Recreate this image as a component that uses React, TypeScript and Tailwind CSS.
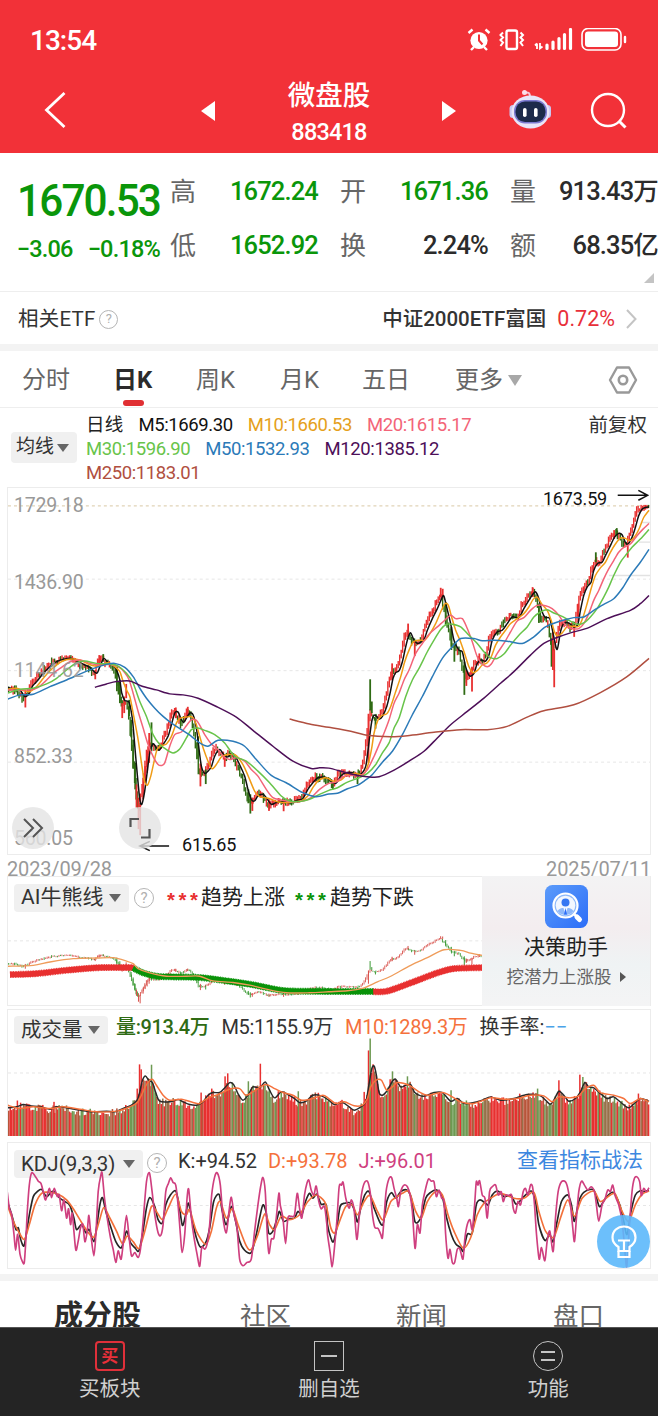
import { ReactNode } from "react";

type Point = [number, number];

// Chart space: 1929 units wide (3 per pixel). Points after the "|" are
// measured from the middle of the chart.
const MIDDLE = 984;
const LEFT = 24;

function parse(series: string): Point[] {
  const points: Point[] = [];
  series.split("|").forEach((half, index) => {
    half
      .trim()
      .split(" ")
      .filter(Boolean)
      .forEach((pair) => {
        const [x, y] = pair.split(",").map(Number);
        points.push([x + index * MIDDLE, y]);
      });
  });
  return points;
}

function valueAt(points: Point[], x: number) {
  if (x <= points[0][0]) return points[0][1];
  for (let i = 1; i < points.length; i++) {
    const [x1, y1] = points[i];
    const [x0, y0] = points[i - 1];
    if (x <= x1) return x1 === x0 ? y1 : y0 + ((y1 - y0) * (x - x0)) / (x1 - x0);
  }
  return points[points.length - 1][1];
}

function smooth(points: Point[]) {
  let d = `M${points[0][0]} ${points[0][1]}`;
  for (let i = 0; i < points.length - 1; i++) {
    const a = points[i - 1] || points[i];
    const b = points[i];
    const c = points[i + 1];
    const e = points[i + 2] || c;
    d += `C${b[0] + (c[0] - a[0]) / 7} ${b[1] + (c[1] - a[1]) / 7} ${c[0] - (e[0] - b[0]) / 7} ${c[1] - (e[1] - b[1]) / 7} ${c[0]} ${c[1]}`;
  }
  return d;
}

function noise(seed: number) {
  const n = Math.sin(seed * 127.1 + 11.7) * 43758.5453;
  return n - Math.floor(n);
}

const M5 = parse(
  "22,622 45,628 60,630 75,650 88,640 98,618 110,605 130,580 150,560 170,545 190,538 215,535 235,545 255,555 270,562 290,580 300,560 312,535 325,548 340,555 352,575 360,600 366,640 375,662 388,668 398,720 405,800 412,880 420,960 426,975 434,940 442,880 450,820 460,793 470,805 478,812 490,795 505,770 515,735 525,700 535,697 545,720 552,728 560,715 570,700 580,705 590,745 597,800 605,860 615,882 625,875 635,862 645,830 660,810 672,825 685,832 695,820 708,832 722,860 735,890 745,930 755,960 765,965 775,950 790,945 800,955 815,975 830,970 850,968 875,970 895,962 910,958 925,930 940,910 955,895 975,893 988,900 | 10,905 25,912 40,890 55,880 75,880 90,888 105,880 115,860 122,810 128,760 134,720 142,706 155,718 165,710 178,680 188,640 197,595 205,578 215,572 225,545 235,500 243,470 250,458 260,480 272,490 290,478 300,450 315,415 330,385 345,350 350,348 358,380 370,430 380,480 395,510 405,515 415,560 427,588 440,580 450,550 462,540 475,543 485,525 495,480 510,455 525,450 540,430 555,410 575,412 590,385 605,360 618,340 626,335 635,355 645,395 655,412 668,415 680,470 690,508 700,455 710,430 725,428 740,440 752,432 760,390 770,345 780,320 792,305 800,270 812,248 825,245 835,225 850,195 862,170 875,158 885,162 895,185 903,190 915,170 925,140 935,105 945,85 955,80 966,78"
);

const M10 = parse(
  "22,628 50,625 70,632 90,635 110,620 130,595 150,572 170,555 190,542 215,537 240,540 265,552 285,558 305,555 325,548 345,560 360,575 370,605 380,630 390,650 400,700 415,780 425,850 434,905 443,917 453,890 462,850 472,810 485,798 500,793 515,770 530,730 542,715 560,712 578,712 590,735 600,770 612,810 625,845 637,868 650,855 665,832 685,825 705,825 720,840 735,865 750,900 765,935 780,952 795,955 815,960 835,968 860,970 885,967 905,965 925,950 940,925 955,905 975,895 988,898 | 15,905 40,902 60,885 85,882 108,885 122,855 132,810 140,760 150,725 162,708 178,702 190,680 205,635 220,590 232,545 245,510 258,485 275,480 292,480 308,460 325,430 340,395 353,370 363,375 373,410 385,450 398,480 412,520 425,560 438,578 452,570 465,555 480,548 492,530 505,495 520,470 535,450 550,430 570,415 590,400 605,380 618,357 630,350 643,370 660,390 672,420 682,455 692,468 705,458 720,440 740,438 755,438 768,410 780,370 792,325 805,285 820,262 835,245 850,215 865,190 880,172 895,173 910,180 925,165 938,140 950,110 966,88"
);

const M20 = parse(
  "22,630 60,630 90,630 115,622 135,605 160,580 185,562 210,545 240,540 270,550 300,555 330,553 355,560 375,578 388,600 400,640 415,695 430,745 445,795 462,835 475,855 485,858 495,850 510,800 525,765 545,757 560,738 575,720 590,722 602,740 615,765 635,793 655,810 670,830 690,840 710,835 735,845 755,870 775,890 800,930 820,955 845,962 880,968 910,965 935,955 960,930 988,912 | 25,908 50,890 75,888 100,888 120,870 140,830 155,795 170,760 185,720 200,670 215,640 230,600 245,570 265,520 285,490 305,462 330,440 350,422 370,405 385,415 405,415 420,445 435,485 450,530 465,552 480,560 492,552 510,520 530,490 550,455 570,422 590,412 610,390 630,375 655,376 675,385 695,405 715,435 735,445 755,445 770,430 785,400 800,360 815,330 830,295 845,265 860,240 875,215 890,200 910,190 930,165 948,145 966,128"
);

const M30 = parse(
  "22,640 60,628 100,625 140,612 170,595 200,570 230,548 255,543 290,550 330,552 355,558 380,580 400,610 420,665 440,710 460,765 480,795 500,810 520,820 540,808 560,775 575,750 595,745 615,752 645,765 675,790 705,830 740,845 775,875 810,910 845,950 870,965 900,967 930,960 960,945 988,933 | 30,925 60,908 95,895 120,882 145,855 165,820 185,790 200,745 215,715 235,650 255,600 275,565 300,515 320,480 340,448 358,432 375,432 400,440 425,465 450,490 470,515 488,532 510,535 530,522 550,495 575,465 600,440 620,410 640,395 660,388 680,398 705,408 725,420 750,432 770,428 790,410 810,385 830,350 845,320 860,285 880,245 895,225 915,200 940,175 966,146"
);

const M50 = parse(
  "22,658 60,645 100,643 150,620 200,600 245,580 290,562 320,553 345,550 375,562 400,590 420,625 440,655 465,685 490,710 515,730 545,750 575,770 600,790 625,800 655,782 700,785 735,800 770,840 815,888 860,910 910,940 950,952 988,944 | 30,942 60,928 90,918 110,905 135,885 165,848 195,815 225,765 255,705 285,650 315,590 345,535 375,500 400,475 440,475 465,482 500,480 540,483 585,490 620,470 655,440 700,422 740,412 770,410 800,390 830,372 860,355 885,325 910,285 940,245 966,206"
);

const M120 = parse(
  "285,622 320,612 350,605 390,603 425,618 470,630 510,642 550,645 595,655 650,680 710,712 760,752 820,800 880,845 935,867 960,865 988,866 | 50,878 90,888 120,892 155,892 200,872 245,845 290,815 330,775 370,735 420,695 470,655 520,610 560,575 610,525 650,490 690,472 730,458 785,442 840,415 910,390 940,370 966,345"
);

const M250 = parse(
  "870,718 930,733 988,743 | 70,755 120,767 190,771 240,768 320,758 400,750 480,750 540,740 600,712 650,693 740,675 820,638 900,590 966,535"
);

const averages = [
  { stroke: "#111111", points: M5 },
  { stroke: "#f09c15", points: M10 },
  { stroke: "#f36478", points: M20 },
  { stroke: "#68c44a", points: M30 },
  { stroke: "#2b7ab8", points: M50 },
  { stroke: "#4d0f58", points: M120 },
  { stroke: "#b04f40", points: M250 },
];

const RED = "#e83030";
const GREEN = "#2f6b14";

// x, top, bottom, colour of the days that run far from the average
const spikes: [number, number, number, string][] = [
  [76, 630, 683, RED],
  [286, 570, 598, RED],
  [298, 525, 560, RED],
  [310, 522, 545, GREEN],
  [351, 560, 634, GREEN],
  [360, 600, 670, GREEN],
  [367, 670, 715, RED],
  [373, 650, 700, RED],
  [379, 612, 655, RED],
  [388, 660, 710, GREEN],
  [394, 720, 773, GREEN],
  [400, 780, 868, GREEN],
  [406, 850, 930, GREEN],
  [410, 915, 985, RED],
  [416, 955, 1050, RED],
  [421, 975, 1068, RED],
  [430, 895, 960, RED],
  [436, 860, 910, RED],
  [442, 815, 880, RED],
  [448, 760, 850, RED],
  [455, 728, 815, GREEN],
  [528, 683, 715, RED],
  [564, 681, 710, RED],
  [595, 770, 838, GREEN],
  [602, 852, 921, RED],
  [618, 870, 914, GREEN],
  [675, 830, 862, RED],
  [746, 930, 972, GREEN],
  [752, 945, 1003, GREEN],
  [758, 955, 995, RED],
  [808, 960, 995, RED],
  [852, 965, 996, RED],
  [1000, 910, 930, GREEN],
  [1074, 890, 914, GREEN],
  [1107, 702, 850, RED],
  [1112, 598, 692, GREEN],
  [1117, 665, 700, GREEN],
  [1128, 715, 747, GREEN],
  [1178, 550, 600, RED],
  [1226, 430, 470, RED],
  [1246, 480, 528, RED],
  [1324, 322, 350, RED],
  [1330, 325, 352, RED],
  [1339, 365, 435, GREEN],
  [1356, 440, 500, GREEN],
  [1365, 495, 545, GREEN],
  [1395, 545, 645, GREEN],
  [1401, 570, 618, RED],
  [1418, 560, 635, RED],
  [1440, 520, 550, RED],
  [1600, 320, 350, RED],
  [1619, 370, 428, GREEN],
  [1657, 475, 560, GREEN],
  [1665, 507, 622, RED],
  [1661, 455, 570, RED],
  [1725, 435, 470, RED],
  [1737, 370, 425, RED],
  [1790, 215, 245, GREEN],
  [1845, 148, 175, RED],
  [1853, 142, 160, GREEN],
  [1886, 195, 231, RED],
];

const STEP = 4.45;
const days = Array.from({ length: 433 }, (_, i) => {
  const x = LEFT + 2 + i * STEP;
  const open = valueAt(M5, x + 4) + (noise(i) - 0.5) * 12;
  const close = valueAt(M5, x + 9) + (noise(i + 1) - 0.5) * 12;
  const slope = close - valueAt(M5, x);
  const up = noise(i * 3.3) < 0.55 - slope / 45;
  const shift = Math.max(-14, Math.min(14, slope * 0.3));
  const top = Math.min(open, close) + shift - 3 - noise(i * 5.1) * 7;
  const bottom = Math.max(open, close) + shift + 3 + noise(i * 7.7) * 7;
  return { x, top: Math.max(72, top), bottom, color: up ? RED : GREEN };
});

const VOL5 = parse(
  "22,308 50,305 70,298 90,302 120,305 150,312 170,305 200,308 240,315 280,320 320,318 345,320 375,308 395,300 412,285 420,260 428,225 437,212 447,225 458,232 468,262 480,288 510,290 535,283 550,290 570,298 590,300 610,290 625,270 640,262 660,262 675,248 690,232 702,238 715,265 730,285 745,270 760,245 780,248 797,230 810,255 825,278 845,260 865,268 885,280 900,292 920,288 940,270 965,272 988,285 | 20,298 45,292 65,305 80,315 100,305 115,290 125,235 133,190 140,182 147,210 155,262 165,270 180,255 195,228 205,222 220,245 235,240 250,238 262,262 280,272 295,272 320,262 345,262 370,288 390,280 410,295 440,292 465,285 490,275 520,285 560,280 600,268 640,272 668,297 680,285 695,258 710,270 725,288 745,280 760,260 773,232 785,245 800,248 820,265 840,280 860,275 885,295 905,308 925,292 940,280 966,288"
);

const VOL10 = parse(
  "22,300 60,310 100,305 150,310 190,305 240,312 290,320 350,318 390,305 412,293 425,270 440,238 457,222 470,240 490,270 510,285 545,282 580,292 600,295 625,278 655,268 690,252 720,250 738,270 760,260 797,238 825,250 850,262 880,270 905,285 940,280 970,270 988,280 | 25,295 50,290 80,302 105,300 120,280 130,245 145,225 162,225 178,255 195,245 210,232 245,240 275,260 300,270 345,262 375,275 400,290 440,295 490,278 530,282 570,280 610,270 650,272 675,290 695,275 730,278 755,272 775,250 800,240 820,262 860,270 890,280 910,295 940,280 966,290"
);

const volumeSpikes: [number, number, string][] = [
  [52, 286, RED],
  [162, 290, RED],
  [412, 250, RED],
  [419, 177, RED],
  [424, 192, RED],
  [455, 178, "#6d9a52"],
  [604, 262, RED],
  [636, 250, RED],
  [676, 213, RED],
  [684, 204, RED],
  [746, 228, "#6d9a52"],
  [782, 175, RED],
  [896, 258, "#6d9a52"],
  [1094, 260, RED],
  [1107, 135, RED],
  [1112, 99, "#6d9a52"],
  [1172, 222, RED],
  [1179, 198, "#6d9a52"],
  [1224, 213, "#6d9a52"],
  [1355, 255, "#6d9a52"],
  [1615, 250, "#6d9a52"],
  [1679, 225, RED],
  [1742, 208, RED],
  [1751, 215, "#6d9a52"],
  [1918, 265, RED],
];

const barColors = [RED, "#e83030", "#b8553a", "#97704a", "#6d9a52"];
const volumes = Array.from({ length: 433 }, (_, i) => {
  const x = LEFT + i * STEP;
  const top = valueAt(VOL5, x + 4) + (noise(i * 2.7) - 0.35) * 26;
  const falling = valueAt(M5, x + 14) > valueAt(M5, x) + 5 ? 0.25 : -0.12;
  const pick = Math.max(0, Math.min(4, Math.floor((noise(i * 9.1) + falling) * 5)));
  return { x, top, color: barColors[pick] };
});

const J = parse(
  "22,562 28,610 35,630 42,690 47,738 53,690 60,750 67,772 73,775 78,700 82,620 88,540 95,503 105,512 115,528 123,535 130,560 137,585 148,550 155,578 163,550 172,575 178,570 185,618 192,585 200,640 206,612 212,660 217,625 222,680 228,738 235,710 242,670 249,660 255,712 262,680 267,632 273,690 282,755 288,690 295,560 303,510 307,505 314,580 322,640 332,700 340,735 348,775 355,740 364,765 372,700 380,632 388,700 395,755 405,745 415,760 422,735 430,650 440,530 449,503 457,560 465,630 475,685 483,693 490,660 498,560 506,535 513,518 520,532 528,540 535,600 542,690 547,745 555,690 562,580 567,553 575,640 583,700 592,750 600,787 606,730 615,735 622,720 630,660 636,570 645,515 653,503 662,540 670,640 680,685 688,620 695,577 703,630 712,670 720,765 730,785 742,775 755,765 765,680 775,600 783,545 790,517 797,560 803,690 808,748 815,705 823,700 830,640 838,565 842,600 850,640 858,718 865,640 875,635 885,630 893,565 900,610 907,640 915,570 922,535 928,525 935,555 943,570 950,543 958,590 965,612 975,605 982,660 | 0,690 8,745 14,788 20,740 28,650 35,545 42,540 47,532 55,580 65,610 72,585 80,615 88,705 95,640 102,570 110,535 120,528 128,560 135,630 142,668 152,672 160,690 165,700 170,640 176,560 185,520 193,518 200,550 208,580 213,605 220,560 230,540 240,545 248,570 255,620 263,732 270,660 278,685 285,600 295,550 303,522 312,528 320,530 327,575 335,555 343,580 350,590 355,690 362,762 368,735 375,775 382,775 390,735 398,735 407,765 413,700 420,660 428,645 435,675 442,600 447,530 452,540 457,527 465,570 473,580 480,640 487,560 495,545 505,540 513,570 522,560 528,590 535,570 545,572 553,570 558,610 565,625 572,590 580,600 588,560 595,550 602,570 610,540 616,545 622,600 628,690 636,765 643,730 653,770 660,710 668,680 678,742 685,640 693,560 703,530 715,530 722,550 730,600 736,660 742,712 748,640 755,560 763,528 772,540 782,555 792,545 802,560 808,600 815,650 825,600 833,585 842,555 850,560 857,540 865,575 875,600 885,650 892,720 899,788 906,680 915,560 922,520 930,515 938,530 943,572 950,550 958,560 966,548"
);

const K = parse(
  "22,590 35,630 48,675 55,670 62,705 72,725 80,680 90,620 100,575 112,560 125,553 140,575 155,560 165,562 180,580 195,590 210,602 222,640 230,675 245,660 258,685 268,675 282,712 290,670 300,600 308,578 318,620 332,665 348,712 365,730 380,680 392,715 405,730 417,740 428,690 440,610 450,578 465,605 475,645 488,655 498,600 512,570 528,558 538,600 548,662 558,630 566,595 578,650 590,700 602,728 618,715 630,670 642,590 658,568 668,620 680,660 695,605 708,650 720,710 735,738 755,745 770,690 780,640 790,600 800,625 807,685 820,680 833,640 840,620 852,650 870,642 885,640 895,620 907,630 918,590 930,565 940,580 952,568 965,598 980,600 | 0,660 10,700 18,712 28,670 38,605 52,595 70,595 82,620 90,652 100,610 112,570 125,560 140,610 165,662 178,590 192,563 205,580 220,560 238,555 252,580 263,652 280,640 295,580 310,562 328,555 345,575 358,640 372,690 385,718 400,730 408,740 420,690 435,685 447,600 458,585 475,595 483,600 495,570 512,558 530,575 552,572 567,598 590,575 612,558 625,590 635,660 653,708 668,690 678,712 690,650 703,590 722,570 733,600 742,650 755,590 770,562 800,555 817,605 835,580 858,562 878,600 890,650 900,690 912,620 925,570 940,557 950,560 966,556"
);

const D = parse(
  "22,600 40,650 55,680 73,705 88,660 105,600 125,565 150,562 175,568 200,585 220,612 240,645 262,680 282,698 298,650 312,608 330,640 350,680 368,718 382,695 400,712 418,732 435,680 455,605 470,620 488,645 505,610 528,568 545,620 560,630 570,615 590,680 618,720 635,680 650,610 662,590 680,640 698,612 715,660 740,725 755,735 775,690 795,628 810,660 825,675 845,635 870,645 900,630 925,590 950,570 975,590 | 0,620 10,670 22,685 40,640 55,605 75,600 90,630 110,590 128,572 150,620 168,645 190,590 205,578 225,565 245,560 265,620 282,640 300,590 325,560 345,570 362,630 380,680 408,732 430,700 450,630 470,595 490,580 520,565 560,580 590,580 620,562 635,620 655,680 680,698 700,640 722,585 742,635 765,580 800,558 820,590 850,570 865,568 885,620 905,650 925,600 945,568 966,558"
);

const bullFast = parse(
  "22,288 100,285 150,275 220,265 290,263 340,262 380,272 400,280 415,295 450,308 500,318 560,318 600,318 640,332 700,337 750,345 800,357 860,368 930,368 988,365 | 60,362 105,355 150,335 190,318 250,285 300,262 350,238 400,240 430,248 464,255"
);

const bullTrend = [
  { stroke: "#e83030", points: parse("30,313 110,310 200,300 300,292 402,292") },
  {
    stroke: "#0a930a",
    points: parse("400,293 430,308 470,318 520,320 600,322 680,332 750,342 800,352 860,362 988,364 | 140,364"),
  },
  { stroke: "#e83030", points: parse("| 138,365 180,363 250,338 330,308 380,295 464,292") },
];

function Line({ points, stroke, width = 4.5 }: { points: Point[]; stroke: string; width?: number }) {
  return <path d={smooth(points)} fill="none" stroke={stroke} strokeWidth={width} strokeLinejoin="round" />;
}

function Guide({ y, stroke = "#e6e6e6" }: { y: number; stroke?: string }) {
  return <path d={`M24 ${y}H1953`} stroke={stroke} strokeWidth="3" strokeDasharray="9 9" />;
}

function PriceChart() {
  return (
    <svg className="block h-full w-full" viewBox="24 21 1929 1104" preserveAspectRatio="none">
      <Guide y={75} stroke="#d9c8a5" />
      <Guide y={296} />
      <Guide y={572} />
      <Guide y={848} />
      <path d="M1925 125H1953M1920 184H1953M1830 285H1953" stroke="#e2e2e2" strokeWidth="4" />
      {days.map((day) => (
        <rect key={day.x} x={day.x - 2} y={day.top} width="4.2" height={day.bottom - day.top} fill={day.color} />
      ))}
      {spikes.map(([x, top, bottom, color]) => (
        <rect key={x} x={x - 2.5} y={top} width="5.4" height={bottom - top} fill={color} />
      ))}
      {averages.map((line) => (
        <Line key={line.stroke} points={line.points} stroke={line.stroke} />
      ))}
      <path d="M1856 43H1944M1918 28L1946 43L1918 58" fill="none" stroke="#111" strokeWidth="4.5" />
      <path d="M508 1101H424M450 1087L420 1101L450 1115" fill="none" stroke="#111" strokeWidth="4.5" />
    </svg>
  );
}

function BullBearChart() {
  return (
    <svg className="block h-full w-full" viewBox="24 18 1929 387" preserveAspectRatio="none">
      <Guide y={211} />
      {days
        .filter((day) => day.x < 1446)
        .map((day) => {
          const top = 255 + (day.top - 535) * 0.272;
          return (
            <rect
              key={day.x}
              x={day.x - 1.5}
              y={top}
              width="2.6"
              height={Math.max(3, (day.bottom - day.top) * 0.3)}
              fill={day.color === RED ? "#d8504a" : "#3c9a35"}
            />
          );
        })}
      {spikes
        .filter(([x]) => x < 1446)
        .map(([x, top, bottom, color]) => (
          <rect
            key={x}
            x={x - 1.5}
            y={255 + (top - 535) * 0.272}
            width="3"
            height={(bottom - top) * 0.272}
            fill={color === RED ? "#d8504a" : "#3c9a35"}
          />
        ))}
      {bullTrend.map((line, index) => (
        <g key={index}>
          <Line points={line.points} stroke={line.stroke} width={17} />
          <path
            d={smooth(line.points)}
            fill="none"
            stroke={line.stroke}
            strokeWidth="21"
            strokeDasharray="2.5 2.5"
          />
        </g>
      ))}
      <Line points={bullFast} stroke="#ef9c5a" width={4} />
      <rect x="1949" y="198" width="4" height="20" fill={RED} />
    </svg>
  );
}

function VolumeChart() {
  return (
    <svg className="block h-full w-full" viewBox="24 13 1929 380" preserveAspectRatio="none">
      <Guide y={203} />
      {volumes.map((bar) => (
        <rect key={bar.x} x={bar.x} y={bar.top} width="4.6" height={393 - bar.top} fill={bar.color} />
      ))}
      {volumeSpikes.map(([x, top, color]) => (
        <rect key={x} x={x - 2} y={top} width="4.5" height={393 - top} fill={color} />
      ))}
      <Line points={VOL5} stroke="#2a2a2a" />
      <Line points={VOL10} stroke="#f5713c" />
    </svg>
  );
}

function KdjChart() {
  return (
    <svg className="block h-full w-full" viewBox="24 412 1929 380" preserveAspectRatio="none">
      <Guide y={602} />
      <Line points={K} stroke="#262626" width={5} />
      <Line points={D} stroke="#f2703a" width={5} />
      <Line points={J} stroke="#cf3f7f" width={5} />
    </svg>
  );
}

function StatusIcons() {
  return (
    <svg className="mt-[1px] h-6 w-40" viewBox="467 28 160 24" fill="none" stroke="#fff">
      <circle cx="479" cy="40.5" r="8.6" fill="#fff" stroke="none" />
      <path d="M474 47L471 50M484 47L487 50M468.5 33L472.5 29.5M489.5 33L485.5 29.5" strokeWidth="2.4" />
      <path d="M479 34.5V40.5L482.5 44.5" stroke="#f23138" strokeWidth="2" />
      <rect x="506.5" y="30.5" width="10.5" height="18.5" rx="1.8" strokeWidth="2.4" />
      <path d="M503 32.5L500.500 35L503 37.500L500.500 40L503 42.500L500.500 46M520.500 32.500L523 35L520.500 37.500L523 40L520.500 42.500L523 46" strokeWidth="2" />
      <path d="M537 43.5V49M535 45.5L537 43.5M540 43V48.5L542.5 46.5" strokeWidth="1.8" />
      <path d="M547 45V48.5M553 42V48.5M559 38.5V48.5M564.5 34.5V48.500M570.500 29.500V48.500" strokeWidth="3.2" strokeLinecap="round" />
      <rect x="582" y="28.5" width="39" height="21.5" rx="6" strokeWidth="1.6" />
      <rect x="585" y="31.5" width="33" height="15.5" rx="3" fill="#fff" stroke="none" />
      <path d="M625 37V42" strokeWidth="2.4" strokeLinecap="round" />
    </svg>
  );
}

function Robot() {
  return (
    <svg className="h-10 w-[44px]" viewBox="508 89 44 40">
      <path d="M530 97C530 93 528.5 92 525 92.5" fill="none" stroke="#f6c6d8" strokeWidth="2" />
      <circle cx="524.5" cy="92.5" r="2.5" fill="#fbdde8" />
      <rect x="509.5" y="105" width="7" height="13" rx="3.5" fill="#c9c8f2" />
      <rect x="544" y="105" width="7" height="13" rx="3.5" fill="#c9c8f2" />
      <ellipse cx="530.5" cy="112" rx="19" ry="16.5" fill="#e9e5f8" />
      <rect x="514" y="100" width="33" height="23.5" rx="11" fill="#7b7ad0" />
      <rect x="515.5" y="101.5" width="30" height="20.5" rx="9.5" fill="#1c2a4a" />
      <rect x="523" y="108" width="3.6" height="9" rx="1.8" fill="#fff" />
      <rect x="534" y="108" width="3.6" height="9" rx="1.8" fill="#fff" />
    </svg>
  );
}

function Question({ className }: { className: string }) {
  return (
    <span
      className={`flex shrink-0 items-center justify-center rounded-full border-[1.5px] border-[#b5b5b5] text-[#b0b0b0] ${className}`}
    >
      ?
    </span>
  );
}

function Caret({ className = "" }: { className?: string }) {
  return (
    <span
      className={`inline-block border-x-[6px] border-t-[8px] border-x-transparent border-t-[#666] ${className}`}
    />
  );
}

function Selector({ children, className }: { children: ReactNode; className: string }) {
  return (
    <div className={`flex items-center justify-between rounded bg-[#f0f0f0] pr-2 ${className}`}>
      <span>{children}</span>
      <Caret />
    </div>
  );
}

function Quote({ label, value, green }: { label: string; value: string; green?: boolean }) {
  return (
    <div className="flex items-center justify-between">
      <span className="text-[26px] text-[#666]">{label}</span>
      <span
        className={`text-[25.5px] font-medium tracking-[-0.85px] whitespace-nowrap ${green ? "text-[#0a960a]" : "text-[#2b2b2b]"}`}
      >
        {value}
      </span>
    </div>
  );
}

function Header() {
  return (
    <header className="h-[153px] bg-[#f23138] text-white">
      <div className="flex h-[78px] items-center justify-between pr-[31px] pl-[30px]">
        <span className="pt-1 text-[28px] font-medium tracking-[-1px]">13:54</span>
        <StatusIcons />
      </div>
      <div className="flex h-[66px] items-center">
        <svg className="ml-[44px] h-10 w-6" viewBox="0 0 24 40" fill="none" stroke="#fff" strokeWidth="2.8">
          <path d="M20.5 2L2.5 19L20.5 36" />
        </svg>
        <span className="ml-[133px] border-y-[10px] border-r-[14px] border-y-transparent border-r-white" />
        <div className="mt-[6px] ml-[54px] flex w-[120px] flex-col items-center">
          <h1 className="text-[27.5px] leading-[37px] font-medium">微盘股</h1>
          <span className="text-[23.5px] leading-[37px] font-medium tracking-[-0.8px]">883418</span>
        </div>
        <span className="ml-[53px] border-y-[10px] border-l-[14px] border-y-transparent border-l-white" />
        <div className="mb-1 ml-[52px]">
          <Robot />
        </div>
        <svg className="ml-[38px] h-10 w-10" viewBox="0 0 40 40" fill="none" stroke="#fff" strokeWidth="2.4">
          <circle cx="18" cy="19" r="16" />
          <path d="M29 30L35.500 36.500" strokeWidth="3" />
        </svg>
      </div>
    </header>
  );
}

function QuotePanel() {
  return (
    <section className="relative h-[139px] border-b border-[#eeeeee] pt-[12px]">
      <div className="grid grid-cols-[148px_148px_148px_148px] gap-x-[22px]">
        <div className="flex h-[108px] w-[160px] flex-col items-end whitespace-nowrap text-[#0a960a]">
          <span className="mt-[8px] origin-right scale-x-[0.94] text-[45px] leading-[56px] font-medium tracking-[-2px]">
            1670.53
          </span>
          <div className="flex gap-[15px] text-[23.5px] leading-[40px] font-medium tracking-[-0.8px]">
            <span>−3.06</span>
            <span>−0.18%</span>
          </div>
        </div>
        <div className="grid grid-rows-2 leading-none">
          <Quote label="高" value="1672.24" green />
          <Quote label="低" value="1652.92" green />
        </div>
        <div className="grid grid-rows-2 leading-none">
          <Quote label="开" value="1671.36" green />
          <Quote label="换" value="2.24%" />
        </div>
        <div className="grid grid-rows-2 leading-none">
          <Quote label="量" value="913.43万" />
          <Quote label="额" value="68.35亿" />
        </div>
      </div>
      <span className="absolute right-[4px] bottom-[8px] border-b-[10px] border-l-[10px] border-b-[#c4c4c4] border-l-transparent" />
    </section>
  );
}

function RelatedFund() {
  return (
    <section className="flex h-[52px] items-center pt-[2px] pr-[21px] pl-[18px] text-[20.5px] text-[#333]">
      <span className="tracking-[0.2px]">相关ETF</span>
      <Question className="ml-1 size-[19px] text-[13px]" />
      <span className="ml-auto font-medium">中证2000ETF富国</span>
      <span className="ml-[11px] text-[21.5px] text-[#e8303a]">0.72%</span>
      <svg className="ml-[10px] h-5 w-3" viewBox="0 0 12 20" fill="none" stroke="#c4c4c4" strokeWidth="2">
        <path d="M2 1L10.5 10L2 19" />
      </svg>
    </section>
  );
}

function PeriodTabs() {
  return (
    <nav className="flex h-[57px] items-center border-b border-[#eeeeee] pt-[2px] text-[24px] text-[#666]">
      <span className="ml-[22px] w-[91px]">分时</span>
      <span className="relative w-[83px] font-bold text-[#2b2b2b]">
        日K
        <span className="absolute top-[38px] left-[10px] h-[6px] w-[21px] rounded-[3px] bg-[#e02f33]" />
      </span>
      <span className="w-[84px]">周K</span>
      <span className="w-[82px]">月K</span>
      <span className="w-[93px]">五日</span>
      <span>更多</span>
      <span className="ml-[5px] border-x-[7px] border-t-[11px] border-x-transparent border-t-[#a8a8a8]" />
      <svg className="mr-[20px] ml-auto h-[30px] w-[30px]" viewBox="0 0 30 30" fill="none" stroke="#999">
        <path d="M9 2.5H21L28 15L21 27.5H9L2 15Z" strokeWidth="2.4" strokeLinejoin="round" />
        <circle cx="15" cy="15" r="4.2" strokeWidth="2.6" />
      </svg>
    </nav>
  );
}

function AverageLegend() {
  return (
    <section className="flex h-[79px] pl-[11px] text-[19px] text-[#333]">
      <Selector className="mt-6 h-[31px] w-[66px] pl-[5px]">均线</Selector>
      <div className="ml-[9px] pt-[5px] text-[18.5px] leading-6 tracking-[-0.4px]">
        <div className="flex gap-[15px]">
          <span className="tracking-[0.2px] text-[#222]">日线</span>
          <span className="text-[#111]">M5:1669.30</span>
          <span className="text-[#e5a01c]">M10:1660.53</span>
          <span className="text-[#f36478]">M20:1615.17</span>
        </div>
        <div className="flex gap-[15px]">
          <span className="text-[#68c44a]">M30:1596.90</span>
          <span className="text-[#2b7ab8]">M50:1532.93</span>
          <span className="text-[#4d0f58]">M120:1385.12</span>
        </div>
        <div className="text-[#b04f40]">M250:1183.01</div>
      </div>
      <span className="mt-[3px] mr-[11px] ml-auto text-[19.5px]">前复权</span>
    </section>
  );
}

function PricePanel() {
  return (
    <section className="mr-[7px] ml-[7px] h-[389px] text-[19.5px] text-[#999]">
      <div className="relative h-[368px] border border-[#ececec]">
        <PriceChart />
        <div className="absolute top-[6px] left-[6px] leading-6 tracking-[-0.2px]">1729.18</div>
        <div className="absolute top-[83px] left-[6px] leading-6 tracking-[-0.2px]">1436.90</div>
        <div className="absolute top-[171px] left-[6px] leading-6 tracking-[-0.2px] opacity-90">1144.62</div>
        <div className="absolute top-[257px] left-[6px] leading-6 tracking-[-0.2px]">852.33</div>
        <div className="absolute top-[339px] left-[6px] leading-6 tracking-[-0.2px]">560.05</div>
        <div className="absolute top-[-1px] right-[43px] text-[18px] leading-6 tracking-[-0.2px] text-[#111]">
          1673.59
        </div>
        <div className="absolute top-[347px] left-[174px] text-[18px] leading-5 tracking-[-0.2px] text-[#111]">
          615.65
        </div>
        <div className="absolute top-[319px] left-[4px] flex size-[42px] items-center justify-center rounded-full bg-[#e4e4e4]/80">
          <svg className="size-6" viewBox="0 0 24 24" fill="none" stroke="#555" strokeWidth="2">
            <path d="M3 3L12 12L3 21M12 3L21 12L12 21" />
          </svg>
        </div>
        <div className="absolute top-[319px] left-[111px] flex size-[42px] items-center justify-center rounded-full bg-[#e4e4e4]/80">
          <svg className="size-6" viewBox="0 0 24 24" fill="none" stroke="#555" strokeWidth="2.2">
            <path d="M2.5 11V3H11M13 21.5H21.5V13" />
          </svg>
        </div>
      </div>
      <div className="flex h-[21px] justify-between text-[20px] leading-[29px] tracking-[-0.15px]">
        <span>2023/09/28</span>
        <span>2025/07/11</span>
      </div>
    </section>
  );
}

function BullBearPanel() {
  return (
    <section className="relative mx-[7px] h-[130px] border border-[#ececec]">
      <BullBearChart />
      <div className="absolute top-[5px] left-[6px] flex items-center text-[21px] text-[#333]">
        <Selector className="h-7 w-[115px] pl-[7px]">AI牛熊线</Selector>
        <Question className="ml-[5px] size-[20px] text-[15px]" />
        <span className="ml-[11px] w-[36px] pt-[10px] font-['Liberation_Mono',monospace] text-[20px] leading-none font-bold tracking-[-0.5px] text-[#e83030]">
          ***
        </span>
        <span className="text-[#222]">趋势上涨</span>
        <span className="ml-[8px] w-[37px] pt-[10px] font-['Liberation_Mono',monospace] text-[20px] leading-none font-bold tracking-[-0.5px] text-[#0a930a]">
          ***
        </span>
        <span className="text-[#222]">趋势下跌</span>
      </div>
      <div className="absolute top-[-1px] right-0 flex h-[130px] w-[168px] flex-col items-center bg-[linear-gradient(#f3f3f4,#f3edef_40%,#eff3f4_68%,#f4f4f5)] pt-[9px]">
        <svg className="size-[43px]" viewBox="0 0 43 43">
          <defs>
            <linearGradient id="tile" x1="0" y1="0" x2="1" y2="1">
              <stop offset="0" stopColor="#5b9bfa" />
              <stop offset="1" stopColor="#2c6df8" />
            </linearGradient>
          </defs>
          <rect width="43" height="43" rx="7.5" fill="url(#tile)" />
          <path d="M32 32L34.5 34.5" stroke="#fff" strokeWidth="5" strokeLinecap="round" />
          <path d="M28 28L32 32" stroke="#fff" strokeWidth="2.5" />
          <circle cx="20.5" cy="20.5" r="12" fill="#8db8fa" stroke="#fff" strokeWidth="2.2" />
          <circle cx="20.5" cy="20.5" r="9.8" fill="#f2f7ff" />
          <circle cx="20.5" cy="17.5" r="4" fill="#3577f2" />
          <path d="M12.500 26C14 23.5 17 23 18.500 23L20.5 29.5L22.500 23C24 23 27 23.5 28.500 26C25 31.5 16 31.5 12.500 26Z" fill="#8db8fa" />
          <path d="M20.5 23L22 29.500H19Z" fill="#2c6df8" />
        </svg>
        <span className="mt-[4px] text-[21px] leading-[30px] text-[#1f1f1f]">决策助手</span>
        <span className="mt-[1px] flex items-center text-[17.5px] leading-[28px] text-[#666]">
          挖潜力上涨股
          <span className="ml-2 border-y-[5px] border-l-[6px] border-y-transparent border-l-[#555]" />
        </span>
      </div>
    </section>
  );
}

function VolumePanel() {
  return (
    <section className="relative mx-[7px] mt-[3px] h-[127px] border border-b-0 border-[#ececec]">
      <VolumeChart />
      <div className="absolute top-[6px] left-[6px] flex items-start text-[20.5px] whitespace-nowrap text-[#333]">
        <Selector className="h-7 w-[94px] pl-[7px]">成交量</Selector>
        <div className="ml-[8px] flex gap-[12px] text-[20px] leading-[22px] tracking-[-0.35px]">
          <span className="font-medium text-[#2f6b14]">量:913.4万</span>
          <span>M5:1155.9万</span>
          <span className="text-[#f5713c]">M10:1289.3万</span>
          <span className="tracking-[0px]">
            换手率:<span className="text-[#4aa3e8]">−−</span>
          </span>
        </div>
      </div>
    </section>
  );
}

function KdjPanel() {
  return (
    <section className="relative mx-[7px] mt-[6px] h-[127px] border border-[#ececec]">
      <div className="absolute top-[7px] left-[6px] flex items-start text-[20.5px] whitespace-nowrap text-[#333]">
        <Selector className="h-7 w-[129px] pl-[7px]">KDJ(9,3,3)</Selector>
        <Question className="mt-[3px] ml-[4px] size-[20px] text-[15px]" />
        <div className="ml-[11px] flex gap-[11px] text-[20px] leading-[22px]">
          <span>K:+94.52</span>
          <span className="text-[#f5713c]">D:+93.78</span>
          <span className="text-[#cf3f7f]">J:+96.01</span>
        </div>
      </div>
      <span className="absolute top-[6px] right-[7px] text-[21px] leading-[23px] text-[#3d87e0]">查看指标战法</span>
      <div className="relative h-full">
        <KdjChart />
      </div>
      <div className="absolute right-0 bottom-0 flex size-[53px] items-center justify-center rounded-full bg-[#5cb8fb]/90">
        <svg className="h-9 w-7" viewBox="0 0 28 36" fill="none" stroke="#fff" strokeWidth="2.2">
          <path d="M8.5 27V23C4.5 20.5 2.5 17 2.5 13.5C2.5 7 7.5 2.5 14 2.5S25.5 7 25.5 13.5C25.5 17 23.5 20.5 19.5 23V27Z" />
          <path d="M8 16.5H20M14 16.5V27M8.5 27V33H19.5V27" />
        </svg>
      </div>
    </section>
  );
}

function SectionTabs() {
  return (
    <nav className="flex h-[46px] overflow-hidden pt-[16px] pl-[54px] text-[25.5px] leading-[38px] whitespace-nowrap text-[#666]">
      <span className="w-[186px] text-[29px] font-bold text-[#2b2b2b]">成分股</span>
      <span className="w-[156px]">社区</span>
      <span className="w-[157px]">新闻</span>
      <span>盘口</span>
    </nav>
  );
}

function BottomBar() {
  return (
    <footer className="grid h-[90px] grid-cols-3 border-t border-[#555] bg-[#242424] pt-[13px] text-center text-[20.5px] text-[#d0d0d0]">
      <div className="flex flex-col items-center">
        <span className="flex size-[30px] items-center justify-center rounded-[4px] border-2 border-[#e0303a] text-[17px] leading-none font-bold text-[#e8303a]">
          买
        </span>
        <span className="mt-[3px] leading-[30px]">买板块</span>
      </div>
      <div className="flex flex-col items-center">
        <span className="flex size-[30px] items-center justify-center border-[1.5px] border-[#c4c4c4]">
          <span className="h-[1.5px] w-4 bg-[#c4c4c4]" />
        </span>
        <span className="mt-[3px] leading-[30px]">删自选</span>
      </div>
      <div className="flex flex-col items-center">
        <span className="flex size-[30px] flex-col items-center justify-center gap-[6px] rounded-full border-[1.5px] border-[#c4c4c4]">
          <span className="h-[2px] w-[14px] bg-[#c4c4c4]" />
          <span className="h-[2px] w-[14px] bg-[#c4c4c4]" />
        </span>
        <span className="mt-[3px] leading-[30px]">功能</span>
      </div>
    </footer>
  );
}

export default function App() {
  return (
    <div className="h-[1416px] w-[658px] overflow-hidden bg-white font-[Roboto,'Noto_Sans_CJK_SC',sans-serif]">
      <Header />
      <QuotePanel />
      <RelatedFund />
      <div className="h-[7px] bg-[#f3f3f3]" />
      <PeriodTabs />
      <AverageLegend />
      <PricePanel />
      <BullBearPanel />
      <VolumePanel />
      <KdjPanel />
      <div className="mt-[5px] h-[7px] bg-[#f3f3f3]" />
      <SectionTabs />
      <BottomBar />
    </div>
  );
}
